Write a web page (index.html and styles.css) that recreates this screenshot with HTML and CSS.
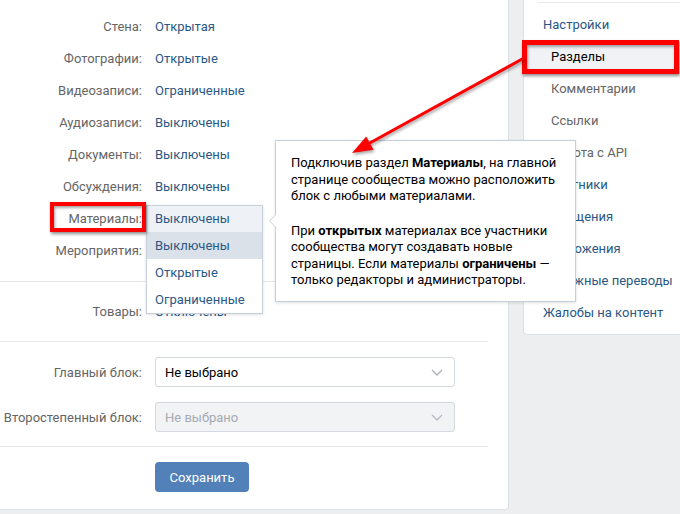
FILE: index.html
```html
<!DOCTYPE html>
<html lang="ru">
<head>
<meta charset="utf-8">
<title>Разделы</title>
<link rel="stylesheet" href="styles.css">
</head>
<body>
<div class="page">
  <main class="panel">
    <section class="sec sec-access">
      <div class="row"><span class="lbl">Стена:</span><span class="val">Открытая</span></div>
      <div class="row"><span class="lbl">Фотографии:</span><span class="val">Открытые</span></div>
      <div class="row"><span class="lbl">Видеозаписи:</span><span class="val">Ограниченные</span></div>
      <div class="row"><span class="lbl">Аудиозаписи:</span><span class="val">Выключены</span></div>
      <div class="row"><span class="lbl">Документы:</span><span class="val">Выключены</span></div>
      <div class="row"><span class="lbl">Обсуждения:</span><span class="val">Выключены</span></div>
      <div class="row"><span class="lbl">Материалы:</span><span class="val">Выключены</span></div>
      <div class="row"><span class="lbl">Мероприятия:</span><span class="val">Выключены</span></div>
    </section>
    <section class="sec sec-goods">
      <div class="row"><span class="lbl">Товары:</span><span class="val">Отключены</span></div>
    </section>
    <section class="sec sec-blocks">
      <div class="frow">
        <span class="lbl">Главный блок:</span>
        <div class="select"><span>Не выбрано</span><svg class="chev" width="12" height="7" viewBox="0 0 12 7"><path d="M1 1l5 5 5-5" fill="none" stroke="#a9b1bb" stroke-width="1.3"/></svg></div>
      </div>
      <div class="frow">
        <span class="lbl">Второстепенный блок:</span>
        <div class="select disabled"><span>Не выбрано</span><svg class="chev" width="12" height="7" viewBox="0 0 12 7"><path d="M1 1l5 5 5-5" fill="none" stroke="#b4bac2" stroke-width="1.3"/></svg></div>
      </div>
    </section>
    <section class="sec sec-save">
      <button class="btn" type="button">Сохранить</button>
    </section>

    <ul class="dropdown">
      <li class="dd-cur">Выключены</li>
      <li class="dd-hover">Выключены</li>
      <li>Открытые</li>
      <li>Ограниченные</li>
    </ul>
  </main>

  <aside class="side">
    <div class="side-sep"></div>
    <a class="nav">Настройки</a>
    <a class="nav sub active">Разделы</a>
    <a class="nav sub">Комментарии</a>
    <a class="nav sub">Ссылки</a>
    <a class="nav sub">Работа с API</a>
    <a class="nav">Участники</a>
    <a class="nav">Сообщения</a>
    <a class="nav">Приложения</a>
    <a class="nav">Денежные переводы</a>
    <a class="nav">Жалобы на контент</a>
  </aside>

  <div class="tip">
    <p>Подключив раздел <b>Материалы</b>, на главной<br>странице сообщества можно расположить<br>блок с любыми материалами.</p>
    <p>При <b>открытых</b> материалах все участники<br>сообщества могут создавать новые<br>страницы. Если материалы <b>ограничены</b> —<br>только редакторы и администраторы.</p>
  </div>

  <span class="mark mark-mat"></span>
  <span class="mark mark-razd"></span>

  <svg class="arrow" width="680" height="514" viewBox="0 0 680 514">
    <line x1="524" y1="58" x2="368" y2="144" stroke="#f00" stroke-width="3"/>
    <polygon points="352,153 373.5,149.8 366.2,136.6" fill="#f00"/>
  </svg>
</div>
</body>
</html>
```

FILE: styles.css
```css
* { box-sizing: border-box; }

body {
  margin: 0;
  background: #edeef0;
  font-family: Roboto, "Open Sans", "DejaVu Sans", sans-serif;
  font-size: 13px;
  overflow: hidden;
}

.page {
  position: relative;
  display: flex;
  align-items: flex-start;
  width: 680px;
  height: 514px;
  overflow: hidden;
}

/* main panel */
.panel {
  position: relative;
  flex-shrink: 0;
  width: 509px;
  padding-right: 20px;
  background: #fff;
  border-right: 1px solid #dce1e6;
  border-bottom: 1px solid #dce1e6;
  border-radius: 0 0 4px 0;
}

.sec { border-bottom: 1px solid #e7e8ec; }
.sec-save { border-bottom: 0; padding: 15px 0 17px; }

.sec-access { padding: 10px 0 15px; }
.sec-goods { padding: 13px 0 14px; }
.sec-blocks {
  padding: 15px 0 14px;
  display: flex;
  flex-direction: column;
  gap: 15px;
}

.row {
  display: grid;
  grid-template-columns: 142px auto;
  column-gap: 13px;
  align-items: center;
  height: 32px;
}

.lbl {
  text-align: right;
  color: #656565;
  white-space: nowrap;
}

.val { color: #2a5885; }

.frow {
  display: grid;
  grid-template-columns: 142px 300px;
  column-gap: 13px;
  align-items: center;
}

.select {
  height: 30px;
  border: 1px solid #d3d9de;
  border-radius: 3px;
  padding: 0 11px 0 9px;
  display: flex;
  align-items: center;
  justify-content: space-between;
  color: #000;
  background: #fff;
}

.select.disabled {
  background: #f2f3f5;
  color: #a5aab0;
}

.chev { display: block; }

.btn {
  display: block;
  margin-left: 155px;
  width: 94px;
  height: 30px;
  padding: 0;
  border: 0;
  border-radius: 4px;
  background: #5181b8;
  color: #fff;
  font-family: inherit;
  font-size: 13px;
}

/* dropdown menu */
.dropdown {
  position: absolute;
  left: 146px;
  top: 205px;
  width: 117px;
  margin: 0;
  padding: 0;
  list-style: none;
  background: #fff;
  border: 1px solid #c5d0db;
  box-shadow: 0 1px 3px rgba(0, 0, 0, .12);
}

.dropdown li {
  height: 27px;
  line-height: 27px;
  padding-left: 8px;
  color: #2a5885;
}

.dropdown .dd-cur { background: #eef1f5; height: 26px; line-height: 26px; }
.dropdown .dd-hover { background: #dae1e8; }

/* right sidebar */
.side {
  flex-shrink: 0;
  width: 170px;
  margin-left: 14px;
  padding: 2px 0 5px;
  background: #fff;
  border: 1px solid #dce1e6;
  border-top: 0;
  border-radius: 0 0 4px 4px;
}

.side-sep {
  height: 1px;
  margin: 0 0 6px 14px;
  background: #e7e8ec;
}

.nav {
  display: block;
  height: 32px;
  line-height: 32px;
  padding-left: 19px;
  color: #2a5885;
  white-space: nowrap;
}

.nav.sub {
  padding-left: 27px;
  color: #656565;
}

.nav.active {
  background: #f0f2f5;
  color: #000;
}

/* tooltip */
.tip {
  position: absolute;
  left: 275px;
  top: 140px;
  width: 301px;
  padding: 14px 15px 12px;
  background: #fff;
  border: 1px solid #c5d0db;
  box-shadow: 0 1px 3px rgba(0, 0, 0, .12);
  color: #000;
  font-size: 13px;
  line-height: 16.5px;
}

.tip p { margin: 0; }
.tip p + p { margin-top: 18px; }

.tip::before,
.tip::after {
  content: "";
  position: absolute;
  top: 73px;
  width: 0;
  height: 0;
  border-style: solid;
}

.tip::before {
  left: -7px;
  border-width: 7px 7px 7px 0;
  border-color: transparent #c5d0db transparent transparent;
}

.tip::after {
  left: -6px;
  border-width: 7px 7px 7px 0;
  border-color: transparent #fff transparent transparent;
}

/* red annotation boxes */
.mark {
  position: absolute;
  border: 4px solid #f00;
  box-shadow: 1px 2px 3px rgba(0, 0, 0, .45), inset 1px 2px 3px rgba(0, 0, 0, .35);
}

.mark-mat {
  left: 50px;
  top: 202px;
  width: 96px;
  height: 30px;
}

.mark-razd {
  left: 522px;
  top: 40px;
  width: 157px;
  height: 34px;
  border-width: 5px;
}

.arrow {
  position: absolute;
  left: 0;
  top: 0;
  pointer-events: none;
  filter: drop-shadow(1px 2px 1.5px rgba(0, 0, 0, .35));
}
```
